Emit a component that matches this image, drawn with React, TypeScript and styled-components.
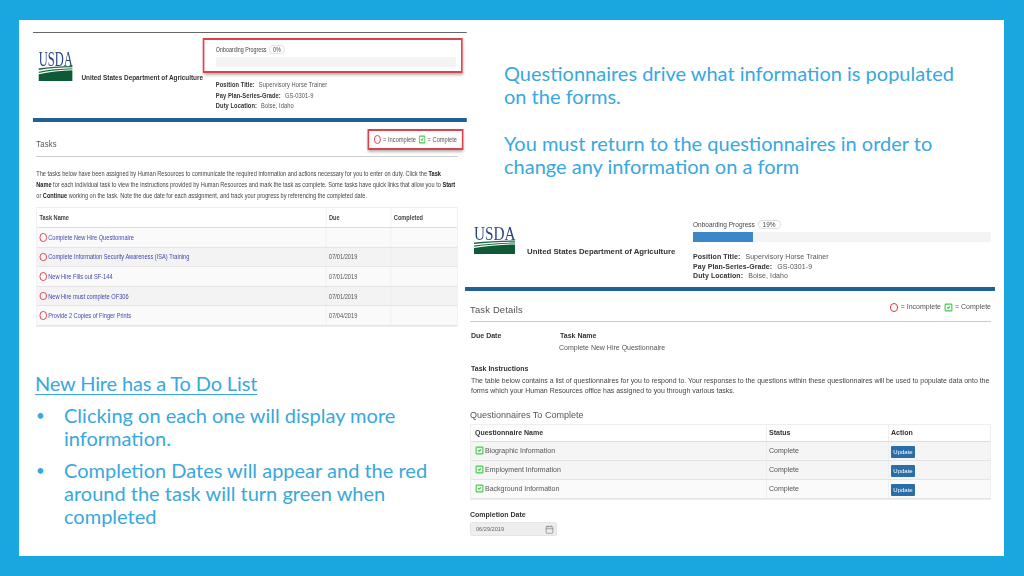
import styled, { createGlobalStyle } from 'styled-components';
import { SquareCheck, Calendar } from 'lucide-react';

const GlobalStyle = createGlobalStyle`
  html, body {
    margin: 0;
    padding: 0;
  }
  body {
    font-family: 'Liberation Sans', Arial, sans-serif;
  }
  * {
    box-sizing: border-box;
  }
`;

const tasks = [
  { name: 'Complete New Hire Questionnaire', due: '' },
  { name: 'Complete Information Security Awareness (ISA) Training', due: '07/01/2019' },
  { name: 'New Hire Fills out SF-144', due: '07/01/2019' },
  { name: 'New Hire must complete OF306', due: '07/01/2019' },
  { name: 'Provide 2 Copies of Finger Prints', due: '07/04/2019' },
];

const questionnaires = [
  'Biographic Information',
  'Employment Information',
  'Background Information',
];

const UsdaLogo = ({ width, height }: { width: number; height: number }) => (
  <LogoSvg width={width} height={height} viewBox="0 0 100 90" preserveAspectRatio="none">
    <text
      transform="translate(0 44) scale(0.6 1)"
      fontFamily="Liberation Serif, serif"
      fontSize="62"
      fill="#2c4683"
    >
      USDA
    </text>
    <path d="M0 52 C30 48 65 46 100 45 L100 49 C65 50 30 52 0 57 Z" fill="#1f6b45" />
    <path d="M0 62 C30 56 65 53 100 52 L100 55 C65 56 30 60 0 66 Z" fill="#1f6b45" />
    <path d="M0 70 C30 63 65 59 100 58 L100 90 L0 90 Z" fill="#0f5a36" />
  </LogoSvg>
);

const EmployeeInfo = ({ $tall }: { $tall?: boolean }) => (
  <InfoLines $tall={$tall}>
    <InfoLine><b>Position Title:</b> Supervisory Horse Trainer</InfoLine>
    <InfoLine><b>Pay Plan-Series-Grade:</b> GS-0301-9</InfoLine>
    <InfoLine><b>Duty Location:</b> Boise, Idaho</InfoLine>
  </InfoLines>
);

const App = () => {
  return (
    <>
      <GlobalStyle />
      <Page>
        <Slide>
          <LeftColumn>
            <TasksShot>
              <TopRule />
              <ShotHeader>
                <Brand>
                  <UsdaLogo width={41} height={30} />
                  <OrgName>United States Department of Agriculture</OrgName>
                </Brand>
                <HeaderInfo>
                  <ProgressCallout>
                    <ProgressLabel>
                      Onboarding Progress <Badge>0%</Badge>
                    </ProgressLabel>
                    <ProgressTrack />
                  </ProgressCallout>
                  <EmployeeInfo $tall />
                </HeaderInfo>
              </ShotHeader>
              <BlueBar />
              <TasksBody>
                <SectionHead>
                  <SectionTitle>Tasks</SectionTitle>
                  <LegendCallout>
                    <Ring /> = Incomplete <GreenCheck size={9} strokeWidth={3} /> = Complete
                  </LegendCallout>
                </SectionHead>
                <TasksIntro>
                  The tasks below have been assigned by Human Resources to communicate the required
                  information and actions necessary for you to enter on duty. Click the <b>Task Name</b> for
                  each individual task to view the instructions provided by Human Resources and mark the
                  task as complete. Some tasks have quick links that allow you to <b>Start</b> or{' '}
                  <b>Continue</b> working on the task. Note the due date for each assignment, and track your
                  progress by referencing the completed date.
                </TasksIntro>
                <TaskTable>
                  <TaskHeadRow>
                    <TaskCell>Task Name</TaskCell>
                    <TaskCell>Due</TaskCell>
                    <TaskCell>Completed</TaskCell>
                  </TaskHeadRow>
                  {tasks.map((task) => (
                    <TaskRow key={task.name}>
                      <TaskCell>
                        <Ring />
                        <TaskLink>{task.name}</TaskLink>
                      </TaskCell>
                      <TaskCell>{task.due}</TaskCell>
                      <TaskCell />
                    </TaskRow>
                  ))}
                </TaskTable>
              </TasksBody>
            </TasksShot>

            <TodoText>
              <TodoTitle>New Hire has a To Do List</TodoTitle>
              <TodoList>
                <TodoItem>Clicking on each one will display more information.</TodoItem>
                <TodoItem>
                  Completion Dates will appear and the red around the task will turn green when completed
                </TodoItem>
              </TodoList>
            </TodoText>
          </LeftColumn>

          <RightColumn>
            <Lead>
              <LeadPara>Questionnaires drive what information is populated on the forms.</LeadPara>
              <LeadPara>
                You must return to the questionnaires in order to change any information on a form
              </LeadPara>
            </Lead>

            <DetailsShot>
              <ShotHeader $large>
                <Brand $large>
                  <UsdaLogo width={41} height={27} />
                  <OrgName $large>United States Department of Agriculture</OrgName>
                </Brand>
                <HeaderInfo $large>
                  <ProgressLabel>
                    Onboarding Progress <Badge>19%</Badge>
                  </ProgressLabel>
                  <ProgressTrack>
                    <ProgressFill style={{ width: '20%' }} />
                  </ProgressTrack>
                  <EmployeeInfo />
                </HeaderInfo>
              </ShotHeader>
              <BlueBar />
              <DetailsBody>
                <DetailsHead>
                  <SectionTitle>Task Details</SectionTitle>
                  <Legend>
                    <Ring /> = Incomplete <GreenCheck size={9} strokeWidth={3} /> = Complete
                  </Legend>
                </DetailsHead>
                <DueRow>
                  <DueCol>
                    <FieldLabel>Due Date</FieldLabel>
                  </DueCol>
                  <div>
                    <FieldLabel>Task Name</FieldLabel>
                    <FieldValue>Complete New Hire Questionnaire</FieldValue>
                  </div>
                </DueRow>
                <FieldLabel>Task Instructions</FieldLabel>
                <Instructions>
                  The table below contains a list of questionnaires for you to respond to. Your responses to
                  the questions within these questionnaires will be used to populate data onto the forms
                  which your Human Resources office has assigned to you through various tasks.
                </Instructions>
                <SubTitle>Questionnaires To Complete</SubTitle>
                <QuestionTable>
                  <QuestionHeadRow>
                    <QuestionCell>Questionnaire Name</QuestionCell>
                    <QuestionCell>Status</QuestionCell>
                    <QuestionCell>Action</QuestionCell>
                  </QuestionHeadRow>
                  {questionnaires.map((name) => (
                    <QuestionRow key={name}>
                      <QuestionCell>
                        <GreenCheck size={9} strokeWidth={3} /> {name}
                      </QuestionCell>
                      <QuestionCell>Complete</QuestionCell>
                      <QuestionCell>
                        <UpdateButton>Update</UpdateButton>
                      </QuestionCell>
                    </QuestionRow>
                  ))}
                </QuestionTable>
                <CompletionLabel>Completion Date</CompletionLabel>
                <DateInput>
                  06/29/2019
                  <Calendar size={9} color="#888" />
                </DateInput>
              </DetailsBody>
            </DetailsShot>
          </RightColumn>
        </Slide>
      </Page>
    </>
  );
};

const Page = styled.div`
  width: 1024px;
  height: 576px;
  padding: 20px 20px 20px 19px;
  background: #1aa7e0;
  overflow: hidden;
`;

const Slide = styled.div`
  display: grid;
  grid-template-columns: 446px 539px;
  width: 985px;
  height: 536px;
  background: #ffffff;
`;

const LeftColumn = styled.div`
  display: flex;
  flex-direction: column;
  padding: 12px 0 0 14px;
  min-width: 0;
`;

const RightColumn = styled.div`
  display: flex;
  flex-direction: column;
  min-width: 0;
`;

/* the left screenshot is the same page squeezed sideways on the slide */
const TasksShot = styled.div`
  flex: none;
  width: 529px;
  height: 294px;
  color: #555;
  filter: blur(0.35px);
  transform: scaleX(0.82);
  transform-origin: left top;
`;

const TopRule = styled.div`
  height: 1px;
  background: #666;
`;

const ShotHeader = styled.div<{ $large?: boolean }>`
  display: flex;
  height: ${(p) => (p.$large ? '82px' : '85px')};
`;

const Brand = styled.div<{ $large?: boolean }>`
  display: flex;
  align-items: flex-start;
  flex: none;
  gap: ${(p) => (p.$large ? '12px' : '11px')};
  width: ${(p) => (p.$large ? '228px' : '207px')};
  padding: ${(p) => (p.$large ? '22px 0 0 9px' : '18px 0 0 7px')};
`;

const LogoSvg = styled.svg`
  flex: none;
  overflow: visible;
`;

const OrgName = styled.div<{ $large?: boolean }>`
  margin-top: ${(p) => (p.$large ? '20px' : '22px')};
  font-size: 7.8px;
  font-weight: 700;
  color: #333;
  white-space: nowrap;
`;

const HeaderInfo = styled.div<{ $large?: boolean }>`
  flex: 1;
  min-width: 0;
  padding: ${(p) => (p.$large ? '13px 4px 0 0' : '0')};
`;

const ProgressCallout = styled.div`
  position: relative;
  width: 317px;
  height: 35px;
  margin-top: 5px;
  padding: 3px 6px 0 14px;
  border: 2px solid #d9434e;
  box-shadow: 1px 2px 3px rgba(0, 0, 0, 0.3);
`;

const ProgressLabel = styled.div`
  height: 14px;
  font-size: 6.5px;
  line-height: 13px;
  color: #444;
  white-space: nowrap;
`;

const Badge = styled.span`
  display: inline-block;
  padding: 0 4px;
  margin-left: 1px;
  height: 9px;
  line-height: 8px;
  border: 1px solid #ddd;
  border-radius: 4px;
  vertical-align: 0;
  background: #fff;
`;

const ProgressTrack = styled.div`
  height: 10px;
  background: #f4f4f4;
  overflow: hidden;
`;

const ProgressFill = styled.div`
  height: 100%;
  background: #3b87c8;
`;

const InfoLines = styled.div<{ $tall?: boolean }>`
  margin-top: ${(p) => (p.$tall ? '7px' : '10px')};
  padding-left: ${(p) => (p.$tall ? '16px' : '0')};
  font-size: 7px;
  line-height: ${(p) => (p.$tall ? '10.5px' : '9.5px')};
  letter-spacing: 0.08px;
  color: #555;

  b {
    color: #333;
    margin-right: 3px;
  }
`;

const InfoLine = styled.div`
  white-space: nowrap;
`;

const BlueBar = styled.div`
  height: 4px;
  background: #1f6195;
`;

const TasksBody = styled.div`
  padding: 0 11px 0 4px;
`;

const SectionHead = styled.div`
  position: relative;
  display: flex;
  align-items: flex-end;
  justify-content: space-between;
  height: 35px;
  padding-bottom: 7px;
  border-bottom: 1px solid #ccc;
`;

const SectionTitle = styled.div`
  font-size: 9.4px;
  letter-spacing: 0.2px;
  color: #555;
`;

const Legend = styled.div`
  display: flex;
  align-items: flex-start;
  gap: 2.5px;
  margin-top: -1px;
  font-size: 7px;
  color: #555;
  white-space: nowrap;
`;

const LegendCallout = styled(Legend)`
  position: absolute;
  top: 7px;
  right: -7px;
  align-items: center;
  justify-content: center;
  width: 117px;
  height: 21px;
  margin-top: 0;
  border: 2px solid #d9434e;
  box-shadow: 1px 2px 3px rgba(0, 0, 0, 0.3);
`;

const Ring = styled.span`
  display: inline-block;
  flex: none;
  width: 8.5px;
  height: 8.5px;
  border: 1.6px solid #d9364a;
  border-radius: 50%;
`;

const GreenCheck = styled(SquareCheck)`
  flex: none;
  color: #45cc4a;
`;

const TasksIntro = styled.p`
  margin: 11px 0 0;
  height: 39px;
  font-size: 6.85px;
  line-height: 11px;
  color: #444;

  b {
    color: #222;
  }
`;

const TaskTable = styled.div`
  font-size: 6.9px;
  color: #555;
  border: 1px solid #eee;
`;

const TaskHeadRow = styled.div`
  display: grid;
  grid-template-columns: 352px 79px 1fr;
  align-items: stretch;
  height: 20px;
  border-bottom: 1px solid #ddd;
  font-weight: 700;
  color: #444;
`;

const TaskRow = styled.div`
  display: grid;
  grid-template-columns: 352px 79px 1fr;
  height: 19.6px;
  border-bottom: 1px solid #e4e4e4;
  background: #fafafa;

  &:nth-child(odd) {
    background: #f3f3f3;
  }
`;

const TaskCell = styled.div`
  display: flex;
  align-items: center;
  gap: 2px;
  padding-left: 3px;
  border-left: 1px solid #eee;
  white-space: nowrap;

  &:first-child {
    border-left: 0;
  }
`;

const TaskLink = styled.span`
  color: #3f48ad;
`;

const TodoText = styled.div`
  margin-top: 46px;
  color: #38a8dd;
  font-family: Lato, sans-serif;
  font-size: 20px;
  line-height: 23px;
`;

const TodoTitle = styled.div`
  margin-left: 2px;
  letter-spacing: -0.15px;
  text-decoration: underline;
  text-decoration-thickness: 1px;
  text-underline-offset: 3px;
`;

const TodoList = styled.ul`
  list-style: none;
  margin: 9px 0 0;
  padding: 0 0 0 31px;
  width: 420px;
`;

const TodoItem = styled.li`
  position: relative;
  margin-bottom: 9px;

  &::before {
    content: '•';
    position: absolute;
    left: -28px;
    font-size: 15px;
  }
`;

const Lead = styled.div`
  flex: none;
  height: 185px;
  padding: 42px 30px 0 39px;
  color: #38a8dd;
  font-family: Lato, sans-serif;
  font-size: 20px;
  line-height: 23px;
`;

const LeadPara = styled.p`
  margin: 0 0 24px;
`;

const DetailsShot = styled.div`
  width: 530px;
  color: #555;
  filter: blur(0.35px);
`;

const DetailsBody = styled.div`
  padding: 0 4px 0 5px;
`;

const DetailsHead = styled.div`
  display: flex;
  justify-content: space-between;
  height: 31px;
  padding-top: 13px;
  border-bottom: 1px solid #ccc;
`;

const DueRow = styled.div`
  display: flex;
  height: 42px;
  padding-top: 9px;
`;

const DueCol = styled.div`
  width: 89px;
`;

const FieldLabel = styled.div`
  font-size: 7px;
  line-height: 9px;
  font-weight: 700;
  color: #333;
  padding-left: 1px;
`;

const FieldValue = styled.div`
  margin-top: 3px;
  font-size: 7px;
  line-height: 9px;
  color: #555;
`;

const Instructions = styled.p`
  margin: 3px 0 0 1px;
  height: 33px;
  font-size: 6.95px;
  line-height: 9.6px;
  color: #444;
`;

const SubTitle = styled.div`
  height: 15px;
  font-size: 9px;
  line-height: 12px;
  color: #555;
`;

const QuestionTable = styled.div`
  border: 1px solid #eee;
  font-size: 7px;
`;

const QuestionHeadRow = styled.div`
  display: grid;
  grid-template-columns: 295px 122px 1fr;
  height: 17px;
  border-bottom: 1px solid #ddd;
  font-weight: 700;
  color: #333;
  align-items: stretch;
`;

const QuestionRow = styled.div`
  display: grid;
  grid-template-columns: 295px 122px 1fr;
  height: 19px;
  border-bottom: 1px solid #e4e4e4;
  background: #f5f5f5;

  &:last-child {
    background: #fafafa;
  }
`;

const QuestionCell = styled.div`
  display: flex;
  align-items: center;
  gap: 1px;
  padding: 0 0 1px 2px;
  border-left: 1px solid #eee;
  white-space: nowrap;

  &:first-child {
    padding-left: 4px;
    border-left: 0;
  }
`;

const UpdateButton = styled.span`
  display: block;
  width: 24px;
  height: 12px;
  margin-top: 2px;
  background: #2a6ea8;
  border-radius: 1px;
  color: #fff;
  font-size: 6px;
  line-height: 12px;
  text-align: center;
`;

const CompletionLabel = styled(FieldLabel)`
  margin-top: 10px;
  padding-left: 0;
`;

const DateInput = styled.div`
  display: flex;
  align-items: center;
  justify-content: space-between;
  width: 87px;
  height: 14px;
  margin-top: 3px;
  padding: 0 2px 0 5px;
  background: #eeeeee;
  border: 1px solid #e4e4e4;
  border-radius: 2px;
  font-size: 5.6px;
  color: #666;
`;

export default App;
